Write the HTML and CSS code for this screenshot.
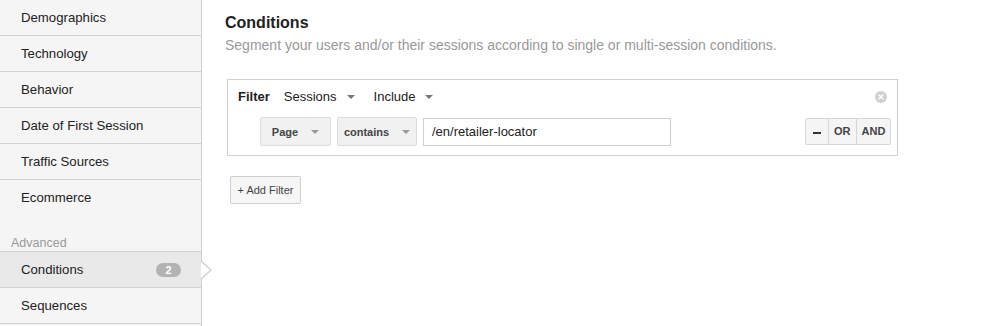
FILE: index.html
```html
<!DOCTYPE html>
<html>
<head>
<meta charset="utf-8">
<link rel="stylesheet" href="styles.css">
</head>
<body>
<div class="page">
  <aside class="sidebar">
    <div class="item">Demographics</div>
    <div class="item">Technology</div>
    <div class="item">Behavior</div>
    <div class="item">Date of First Session</div>
    <div class="item">Traffic Sources</div>
    <div class="item last">Ecommerce</div>
    <div class="section">Advanced</div>
    <div class="item active">Conditions <span class="badge">2</span><span class="arrow"></span></div>
    <div class="item">Sequences</div>
  </aside>
  <main class="main">
    <h1 class="title">Conditions</h1>
    <p class="subtitle">Segment your users and/or their sessions according to single or multi-session conditions.</p>
    <div class="filter">
      <div class="filter-head">
        <span class="label">Filter</span>
        <span class="dd">Sessions <span class="caret"></span></span>
        <span class="dd">Include <span class="caret"></span></span>
        <span class="close"><svg width="12" height="12" viewBox="0 0 12 12"><circle cx="6" cy="6" r="6" fill="#d0d0d0"/><path d="M3.8 3.8L8.2 8.2M8.2 3.8L3.8 8.2" stroke="#fff" stroke-width="1.6"/></svg></span>
      </div>
      <div class="filter-row">
        <span class="btn sel page-sel">Page <span class="caret"></span></span>
        <span class="btn sel contains-sel">contains <span class="caret"></span></span>
        <span class="input">/en/retailer-locator</span>
        <span class="group">
          <span class="gbtn minus"><span class="bar"></span></span><span class="gbtn">OR</span><span class="gbtn">AND</span>
        </span>
      </div>
    </div>
    <span class="add">+ Add Filter</span>
  </main>
</div>
</body>
</html>
```
FILE: styles.css
```css
html, body { margin: 0; padding: 0; background: #fff; }
body { font-family: "Liberation Sans", Arial, sans-serif; width: 999px; height: 326px; overflow: hidden; }
.page { display: flex; height: 326px; }
.sidebar { width: 201px; background: #f5f5f5; border-right: 1px solid #cfcfcf; flex: none; }
.item { position: relative; height: 35px; border-bottom: 1px solid #d2d2d2; padding-left: 21px; font-size: 13.2px; color: #222; line-height: 35px; }
.item.last { height: 55px; border-bottom: none; line-height: 35px; }
.section { font-size: 12.5px; color: #999; padding-left: 11px; height: 16px; line-height: 16px; border-bottom: 1px solid #d2d2d2; }
.item.active { background: #e9e9e9; }
.badge { position: absolute; left: 156px; top: 11px; width: 25px; height: 14px; border-radius: 7px; background: #b3b3b3; color: #fff; font-size: 11px; font-weight: bold; line-height: 14px; text-align: center; }
.arrow { position: absolute; right: -11px; top: 9px; width: 0; height: 0; border-top: 9px solid transparent; border-bottom: 9px solid transparent; border-left: 10px solid #cfcfcf; }
.arrow::after { content: ""; position: absolute; left: -11px; top: -8px; border-top: 8px solid transparent; border-bottom: 8px solid transparent; border-left: 9px solid #fff; }
.main { padding-left: 23px; flex: 1; }
.title { margin: 14px 0 0; font-size: 16px; font-weight: bold; color: #222; line-height: 18px; }
.subtitle { margin: 4px 0 0; font-size: 14px; color: #999; line-height: 18px; }
.filter { margin-top: 25px; margin-left: 2px; width: 669px; height: 75px; border: 1px solid #d0d0d0; box-sizing: content-box; }
.filter-head { display: flex; align-items: center; height: 31px; padding-left: 10px; padding-right: 10px; font-size: 13px; color: #222; margin-top: 1px; }
.label { font-weight: bold; margin-right: 14px; }
.dd { margin-right: 19px; display: inline-flex; align-items: center; }
.caret { display: inline-block; width: 0; height: 0; border-left: 4px solid transparent; border-right: 4px solid transparent; border-top: 4px solid #777; margin-left: 10px; }
.close { margin-left: auto; display: flex; }
.filter-row { display: flex; align-items: center; padding-left: 32px; margin-top: 5px; }
.btn { display: inline-flex; align-items: center; justify-content: center; box-sizing: border-box; height: 29px; border: 1px solid #dcdcdc; border-radius: 2px; background: #f1f1f1; font-size: 11px; font-weight: bold; color: #444; margin-right: 6px; }
.btn .caret { margin-left: 13px; border-top-color: #999; }
.page-sel { width: 71px; }
.contains-sel { width: 80px; }
.input { box-sizing: border-box; width: 248px; height: 28px; border: 1px solid #d0d0d0; font-size: 13px; color: #222; line-height: 26px; padding-left: 8px; }
.group { display: flex; margin-left: 134px; border: 1px solid #d6d6d6; border-radius: 2px; height: 25px; background: #f5f5f5; }
.gbtn { font-size: 11px; font-weight: bold; color: #444; line-height: 25px; padding: 0 5px; border-left: 1px solid #d6d6d6; }
.gbtn:first-child { border-left: none; }
.minus { width: 14px; padding: 0 4px; display: flex; align-items: center; justify-content: center; }
.bar { display: block; width: 8px; height: 2px; background: #333; margin-top: 2px; }
.add { display: inline-block; margin-top: 20px; margin-left: 5px; box-sizing: border-box; height: 28px; width: 71px; border: 1px solid #d0d0d0; border-radius: 2px; background: #f6f6f6; font-size: 11px; color: #444; text-align: center; line-height: 26px; }
```
